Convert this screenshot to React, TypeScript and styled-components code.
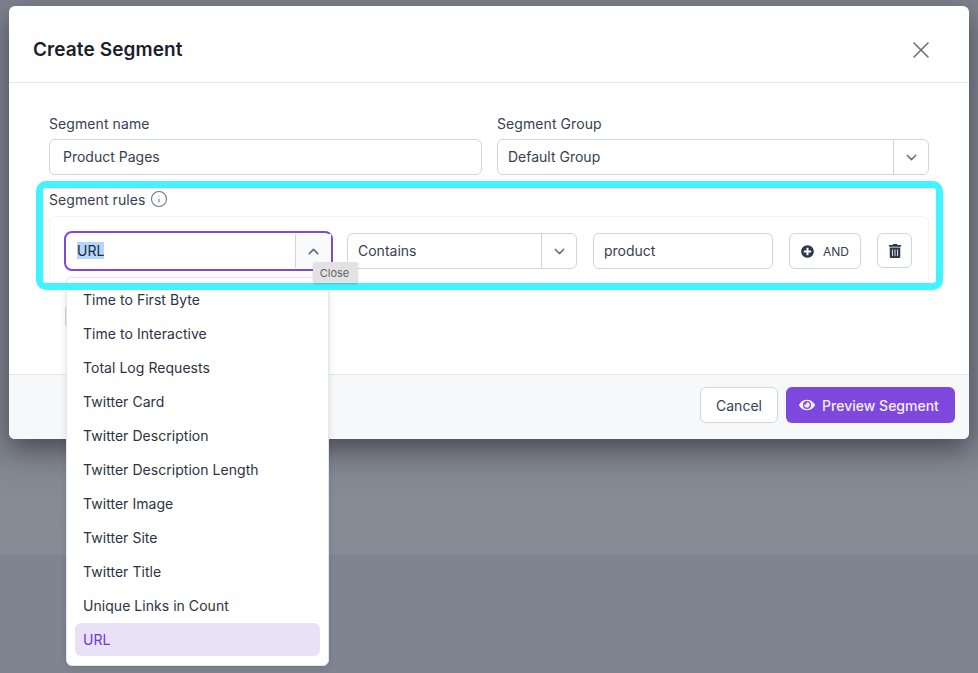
import React from 'react';
import styled, { createGlobalStyle } from 'styled-components';
import { X, ChevronDown, ChevronUp, Info } from 'lucide-react';
import { FaEye, FaPlusCircle, FaTrashAlt } from 'react-icons/fa';

const GlobalStyle = createGlobalStyle`
  html, body {
    margin: 0;
    padding: 0;
    height: 100%;
    overflow: hidden;
    font-family: Inter, "Liberation Sans", sans-serif;
  }
  * { box-sizing: border-box; }
`;

const Backdrop = styled.div`
  width: 978px;
  height: 673px;
  position: relative;
  overflow: hidden;
  padding: 6px 9px;
  background: linear-gradient(180deg, #7f838e 0, #7f838e 440px, #868a95 490px, #868c95 553px, #7f8490 556px, #7f8490 673px);
`;

const Modal = styled.div`
  width: 960px;
  height: 433px;
  background: #fff;
  border-radius: 6px;
  display: flex;
  flex-direction: column;
  box-shadow: 0 10px 28px rgba(25, 27, 36, 0.55);
`;

const Header = styled.header`
  height: 77px;
  flex: none;
  display: flex;
  align-items: center;
  justify-content: space-between;
  padding: 20px 34px 8px 24px;
  border-bottom: 1px solid #e5e7eb;
`;

const Title = styled.h2`
  margin: 0;
  font-size: 19px;
  line-height: 24px;
  font-weight: 600;
  letter-spacing: 0.1px;
  color: #1a202c;
`;

const CloseButton = styled.button`
  border: 0;
  background: none;
  padding: 0;
  width: 28px;
  height: 28px;
  color: #6b7280;
  display: flex;
`;

const Body = styled.div`
  flex: 1;
  padding: 30px 40px 0;
`;

const TopRow = styled.div`
  display: flex;
  gap: 15px;
`;

const Field = styled.div<{ $width: number }>`
  width: ${p => p.$width}px;
`;

const Label = styled.label`
  display: flex;
  align-items: center;
  gap: 5px;
  height: 20px;
  font-size: 14px;
  font-weight: 400;
  letter-spacing: 0.08px;
  color: #374151;
`;

const Input = styled.div<{ $width?: number }>`
  height: 36px;
  width: ${p => (p.$width ? `${p.$width}px` : '100%')};
  margin-top: 6px;
  display: flex;
  align-items: center;
  padding: 0 0 1px 13px;
  border: 1px solid #d1d5db;
  border-radius: 6px;
  background: #fff;
  font-size: 14px;
  color: #374151;
`;

const Select = styled.div<{ $width?: number; $focused?: boolean }>`
  height: ${p => (p.$focused ? 40 : 36)}px;
  width: ${p => (p.$width ? `${p.$width}px` : '100%')};
  margin-top: ${p => (p.$focused ? -2 : 0)}px;
  flex: none;
  display: flex;
  align-items: stretch;
  border: ${p => (p.$focused ? '2px solid #7e47dd' : '1px solid #d1d5db')};
  border-radius: ${p => (p.$focused ? 8 : 6)}px;
  background: #fff;
  font-size: 14px;
  color: #374151;
`;

const GroupSelect = styled(Select)`
  margin-top: 6px;
`;

const OperatorSelect = styled(Select)`
  margin-left: 14px;
`;

const SelectValue = styled.div<{ $focused?: boolean }>`
  flex: 1;
  display: flex;
  align-items: center;
  padding: 0 0 1px ${p => (p.$focused ? 11 : 10)}px;
`;

const Selected = styled.span`
  background: #b4d5fe;
  color: #1f2937;
  line-height: 17px;
`;

const Caret = styled.div<{ $focused?: boolean }>`
  width: ${p => (p.$focused ? 36 : 35)}px;
  display: flex;
  align-items: center;
  justify-content: center;
  border-left: 1px solid #d1d5db;
  color: #6b7280;
  margin: ${p => (p.$focused ? '1px 0' : 0)};
  background: ${p => (p.$focused ? '#f9fafb' : 'transparent')};
`;

const RulesSection = styled.section`
  margin-top: 14px;
`;

const RuleCard = styled.div`
  margin-top: 7px;
  height: 70px;
  display: flex;
  align-items: flex-start;
  padding: 16px 16px 0 14px;
  border: 1px solid #f3f4f6;
  border-radius: 6px;
`;

const RuleInput = styled(Input)`
  margin: 0 16px;
  padding-left: 10px;
`;

const AndButton = styled.button`
  width: 72px;
  height: 36px;
  flex: none;
  display: flex;
  align-items: center;
  gap: 9px;
  padding: 0 0 0 11px;
  border: 1px solid #d1d5db;
  border-radius: 6px;
  background: #fff;
  font: 12px Inter, "Liberation Sans", sans-serif;
  color: #374151;
`;

const IconButton = styled.button`
  width: 35px;
  height: 35px;
  flex: none;
  margin-left: 16px;
  display: flex;
  align-items: center;
  justify-content: center;
  padding: 0;
  border: 1px solid #d1d5db;
  border-radius: 6px;
  background: #fff;
  color: #2d3748;
`;

const AddGroupButton = styled.div`
  width: 100px;
  height: 27px;
  margin: 17px 0 0 16px;
  border: 1px solid #d1d5db;
  border-radius: 6px;
  background: #fff;
`;

const Footer = styled.footer`
  height: 65px;
  flex: none;
  display: flex;
  align-items: flex-start;
  justify-content: flex-end;
  gap: 8px;
  padding: 12px 14px 0 0;
  background: #f7f8fa;
  border-top: 1px solid #e5e7eb;
  border-radius: 0 0 6px 6px;
`;

const CancelButton = styled.button`
  width: 78px;
  height: 36px;
  border: 1px solid #d1d5db;
  border-radius: 6px;
  background: #fff;
  font: 14px Inter, "Liberation Sans", sans-serif;
  color: #374151;
`;

const PrimaryButton = styled.button`
  width: 169px;
  height: 36px;
  display: flex;
  align-items: center;
  justify-content: center;
  gap: 7px;
  padding: 0 3px 0 0;
  border: 0;
  border-radius: 6px;
  background: #7e47dd;
  font: 500 14px Inter, "Liberation Sans", sans-serif;
  color: #f5f0fd;
`;

const Menu = styled.ul`
  position: absolute;
  left: 66px;
  top: 277px;
  width: 263px;
  height: 389px;
  margin: 0;
  padding: 6px 8px 9px 8px;
  list-style: none;
  overflow: hidden;
  display: flex;
  flex-direction: column;
  justify-content: flex-end;
  background: #fff;
  border: 1px solid #e5e7eb;
  border-radius: 6px;
  box-shadow: 0 2px 6px rgba(30, 35, 50, 0.12);
`;

const MenuItem = styled.li<{ $active?: boolean }>`
  flex: none;
  height: ${p => (p.$active ? 33 : 34)}px;
  margin-top: ${p => (p.$active ? 1 : 0)}px;
  display: flex;
  align-items: center;
  padding-left: 8px;
  border-radius: 6px;
  font-size: 14px;
  letter-spacing: 0.04px;
  color: ${p => (p.$active ? '#7038d0' : '#2d3340')};
  background: ${p => (p.$active ? '#e9e1f5' : 'transparent')};
`;

const Highlight = styled.div`
  position: absolute;
  left: 36px;
  top: 181px;
  width: 907px;
  height: 109px;
  border: 7px solid #41f2ff;
  border-radius: 10px;
  pointer-events: none;
`;

const Tooltip = styled.div`
  position: absolute;
  left: 313px;
  top: 262px;
  width: 45px;
  height: 21px;
  display: flex;
  align-items: center;
  justify-content: center;
  padding-right: 2px;
  background: #e2e2e2;
  border-radius: 2px;
  box-shadow: 0 1px 2px rgba(0, 0, 0, 0.18);
  font-size: 11px;
  color: #5f6368;
`;

const options = [
  'Time to First Byte',
  'Time to Interactive',
  'Total Log Requests',
  'Twitter Card',
  'Twitter Description',
  'Twitter Description Length',
  'Twitter Image',
  'Twitter Site',
  'Twitter Title',
  'Unique Links in Count',
];

export default function App() {
  return (
    <Backdrop>
      <GlobalStyle />
      <Modal>
        <Header>
          <Title>Create Segment</Title>
          <CloseButton aria-label="Close">
            <X size={28} strokeWidth={1.4} />
          </CloseButton>
        </Header>
        <Body>
          <TopRow>
            <Field $width={433}>
              <Label>Segment name</Label>
              <Input>Product Pages</Input>
            </Field>
            <Field $width={432}>
              <Label>Segment Group</Label>
              <GroupSelect>
                <SelectValue>Default Group</SelectValue>
                <Caret>
                  <ChevronDown size={17} strokeWidth={2} />
                </Caret>
              </GroupSelect>
            </Field>
          </TopRow>
          <RulesSection>
            <Label>
              Segment rules
              <Info size={18} strokeWidth={1.4} color="#6b7280" />
            </Label>
            <RuleCard>
              <Select $width={269} $focused>
                <SelectValue $focused>
                  <Selected>URL</Selected>
                </SelectValue>
                <Caret $focused>
                  <ChevronUp size={17} strokeWidth={2.6} />
                </Caret>
              </Select>
              <OperatorSelect $width={230}>
                <SelectValue>Contains</SelectValue>
                <Caret>
                  <ChevronDown size={17} strokeWidth={2} />
                </Caret>
              </OperatorSelect>
              <RuleInput $width={180}>product</RuleInput>
              <AndButton>
                <FaPlusCircle size={13} color="#2d3748" />
                AND
              </AndButton>
              <IconButton aria-label="Delete">
                <FaTrashAlt size={14} />
              </IconButton>
            </RuleCard>
            <AddGroupButton />
          </RulesSection>
        </Body>
        <Footer>
          <CancelButton>Cancel</CancelButton>
          <PrimaryButton>
            <FaEye size={16} />
            Preview Segment
          </PrimaryButton>
        </Footer>
      </Modal>
      <Menu>
        {options.map(o => (
          <MenuItem key={o}>{o}</MenuItem>
        ))}
        <MenuItem $active>URL</MenuItem>
      </Menu>
      <Highlight />
      <Tooltip>Close</Tooltip>
    </Backdrop>
  );
}
